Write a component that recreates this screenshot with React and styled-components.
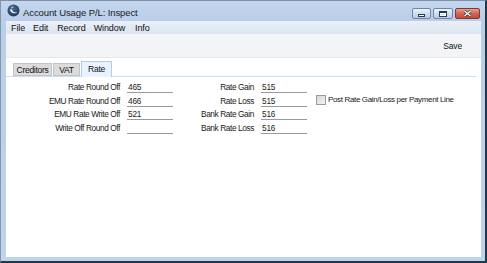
import React from "react";
import styled, { createGlobalStyle } from "styled-components";

const Global = createGlobalStyle`
  html, body { margin: 0; padding: 0; background: #ffffff; }
  body { font-family: "Liberation Sans", Arial, sans-serif; }
  * { box-sizing: border-box; }
`;

const Window = styled.div`
  width: 487px;
  height: 263px;
  display: flex;
  flex-direction: column;
  background: linear-gradient(180deg, #c3d6ee 0%, #b9cee9 20px, #bfd3ec 100%);
  border-top: 1px solid #7d8fa6;
  border-left: 1px solid #8795a8;
  border-right: 2px solid #1e3a48;
  border-bottom: 2px solid #1e3a48;
  padding: 0 4px 4px 5px;
`;

const TitleBar = styled.div`
  height: 19px;
  display: flex;
  align-items: center;
  padding-left: 1px;
`;

const TitleText = styled.div`
  font-family: "Liberation Sans", Arial, sans-serif;
  font-size: 9.5px;
  color: #1b1b1b;
  margin-left: 3px;
  letter-spacing: -0.1px;
  flex: 1;
  padding-top: 4px;
`;

const Buttons = styled.div`
  display: flex;
  gap: 2px;
  align-self: flex-start;
  margin-top: 7px;
  margin-right: 1px;
`;

const WinBtn = styled.div`
  flex-shrink: 0;
  width: ${(p) => p.$w}px;
  height: 11px;
  border-radius: 2px;
  border: 1px solid ${(p) => (p.$close ? "#7d3a30" : "#7285a0")};
  background: ${(p) =>
    p.$close
      ? "linear-gradient(180deg, #e3a093 0%, #cf6657 50%, #c24a3b 100%)"
      : "linear-gradient(180deg, #eaf1f9 0%, #d0ddee 50%, #b9cbe3 100%)"};
  display: flex;
  align-items: center;
  justify-content: center;
`;

const MinGlyph = styled.div`
  width: 7px;
  height: 3px;
  background: #ffffff;
  border: 1px solid #2c3a4e;
  margin-top: 3px;
`;

const MaxGlyph = styled.div`
  width: 8px;
  height: 6px;
  border: 1px solid #2c3a4e;
  border-top-width: 2px;
  box-shadow: inset 0 0 0 1px #ffffff;
  background: #cfdcee;
`;

const Client = styled.div`
  flex: 1;
  display: flex;
  flex-direction: column;
  background: #ffffff;
  margin-top: 1px;
`;

const MenuBar = styled.div`
  height: 13px;
  display: flex;
  align-items: center;
  padding-left: 5px;
  background: linear-gradient(180deg, #eaf0f8 0%, #dbe4f1 100%);
`;

const MenuItem = styled.span`
  font-size: 9px;
  color: #111;
  margin-right: ${(p) => p.$gap}px;
  letter-spacing: -0.1px;
`;

const Toolbar = styled.div`
  height: 24px;
  display: flex;
  align-items: center;
  justify-content: flex-end;
  padding-right: 19px;
  background: #f3f4f6;
  border-bottom: 1px solid #e6e8ec;
`;

const ToolButton = styled.span`
  font-size: 8.5px;
  color: #111;
  letter-spacing: -0.15px;
`;

const Content = styled.div`
  flex: 1;
  display: flex;
  flex-direction: column;
  padding-top: 3px;
`;

const TabStrip = styled.div`
  display: flex;
  align-items: flex-end;
  height: 16px;
  padding-left: 7px;
  margin-right: 5px;
  border-bottom: 1px solid #c9ddf4;
`;

const Tab = styled.div`
  flex-shrink: 0;
  height: ${(p) => (p.$active ? 16 : 13)}px;
  width: ${(p) => p.$w}px;
  margin-right: 1px;
  margin-bottom: ${(p) => (p.$active ? -1 : 0)}px;
  display: flex;
  align-items: center;
  justify-content: center;
  font-size: 8.5px;
  letter-spacing: -0.3px;
  color: #111;
  background: ${(p) => (p.$active ? "#eaf3fd" : "#dcdcdc")};
  border: 1px solid ${(p) => (p.$active ? "#b3cde9" : "#c4c4c4")};
  border-bottom: ${(p) => (p.$active ? "none" : "1px solid #c4c4c4")};
  padding-bottom: ${(p) => (p.$active ? 2 : 0)}px;
`;

const Form = styled.div`
  display: grid;
  grid-template-columns: 114px 46px 74px 46px auto;
  grid-template-rows: repeat(4, 13.7px);
  column-gap: 7px;
  margin-top: 5px;
  align-items: start;
`;

const Label = styled.div`
  font-size: 8.3px;
  line-height: 10px;
  color: #1a1a1a;
  text-align: right;
  white-space: nowrap;
  letter-spacing: -0.4px;
`;

const Field = styled.div`
  height: 11px;
  font-size: 8.3px;
  line-height: 10px;
  color: #1a1a1a;
  padding-left: 1px;
  border-bottom: 1px solid #9a9a9a;
  letter-spacing: -0.2px;
`;

const CheckRow = styled.label`
  display: flex;
  align-items: center;
  margin-left: 2px;
  margin-top: -1px;
  font-size: 8px;
  letter-spacing: -0.35px;
  color: #1a1a1a;
  white-space: nowrap;
`;

const Box = styled.span`
  width: 10px;
  height: 10px;
  border: 1px solid #9a9a9a;
  background: linear-gradient(135deg, #d8d8d8 0%, #f2f2f2 100%);
  margin-right: 2px;
  display: inline-block;
`;

function AppIcon() {
  return (
    <svg width="13" height="13" viewBox="0 0 13 13">
      <defs>
        <radialGradient id="g" cx="0.4" cy="0.35" r="0.7">
          <stop offset="0" stopColor="#4d6f98" />
          <stop offset="1" stopColor="#1d3656" />
        </radialGradient>
      </defs>
      <circle cx="6.5" cy="6.5" r="6" fill="url(#g)" />
      <path d="M3 5.5 C3.5 9 8 10.5 10.5 8 C8.5 9 5.5 8.5 4.8 5.2 Z" fill="#ffffff" />
      <path d="M4.2 3.2 C5 2.6 6.2 2.6 7 3.2 C6 3.1 5 3.4 4.4 4.2 Z" fill="#ffffff" opacity="0.85" />
    </svg>
  );
}

function CloseGlyph() {
  return (
    <svg width="9" height="7" viewBox="0 0 9 7">
      <path d="M1.5 1 L7.5 6 M7.5 1 L1.5 6" stroke="#4a1a12" strokeWidth="2.6" />
      <path d="M1.5 1 L7.5 6 M7.5 1 L1.5 6" stroke="#ffffff" strokeWidth="1.5" />
    </svg>
  );
}

const leftRows = [
  ["Rate Round Off", "465"],
  ["EMU Rate Round Off", "466"],
  ["EMU Rate Write Off", "521"],
  ["Write Off Round Off", ""],
];
const rightRows = [
  ["Rate Gain", "515"],
  ["Rate Loss", "515"],
  ["Bank Rate Gain", "516"],
  ["Bank Rate Loss", "516"],
];

export default function App() {
  return (
    <>
      <Global />
      <Window>
        <TitleBar>
          <AppIcon />
          <TitleText>Account Usage P/L: Inspect</TitleText>
          <Buttons>
            <WinBtn $w={19}><MinGlyph /></WinBtn>
            <WinBtn $w={20}><MaxGlyph /></WinBtn>
            <WinBtn $w={25} $close><CloseGlyph /></WinBtn>
          </Buttons>
        </TitleBar>
        <Client>
          <MenuBar>
            <MenuItem $gap={8}>File</MenuItem>
            <MenuItem $gap={9}>Edit</MenuItem>
            <MenuItem $gap={8}>Record</MenuItem>
            <MenuItem $gap={10}>Window</MenuItem>
            <MenuItem $gap={0}>Info</MenuItem>
          </MenuBar>
          <Toolbar>
            <ToolButton>Save</ToolButton>
          </Toolbar>
          <Content>
            <TabStrip>
              <Tab $w={39}>Creditors</Tab>
              <Tab $w={27}>VAT</Tab>
              <Tab $w={31} $active>Rate</Tab>
            </TabStrip>
            <Form>
              {leftRows.map(([l, v], i) => (
                <React.Fragment key={l}>
                  <Label style={{ gridRow: i + 1, gridColumn: 1 }}>{l}</Label>
                  <Field style={{ gridRow: i + 1, gridColumn: 2 }}>{v}</Field>
                  <Label style={{ gridRow: i + 1, gridColumn: 3 }}>{rightRows[i][0]}</Label>
                  <Field style={{ gridRow: i + 1, gridColumn: 4 }}>{rightRows[i][1]}</Field>
                </React.Fragment>
              ))}
              <CheckRow style={{ gridRow: 2, gridColumn: 5 }}>
                <Box />
                Post Rate Gain/Loss per Payment Line
              </CheckRow>
            </Form>
          </Content>
        </Client>
      </Window>
    </>
  );
}
